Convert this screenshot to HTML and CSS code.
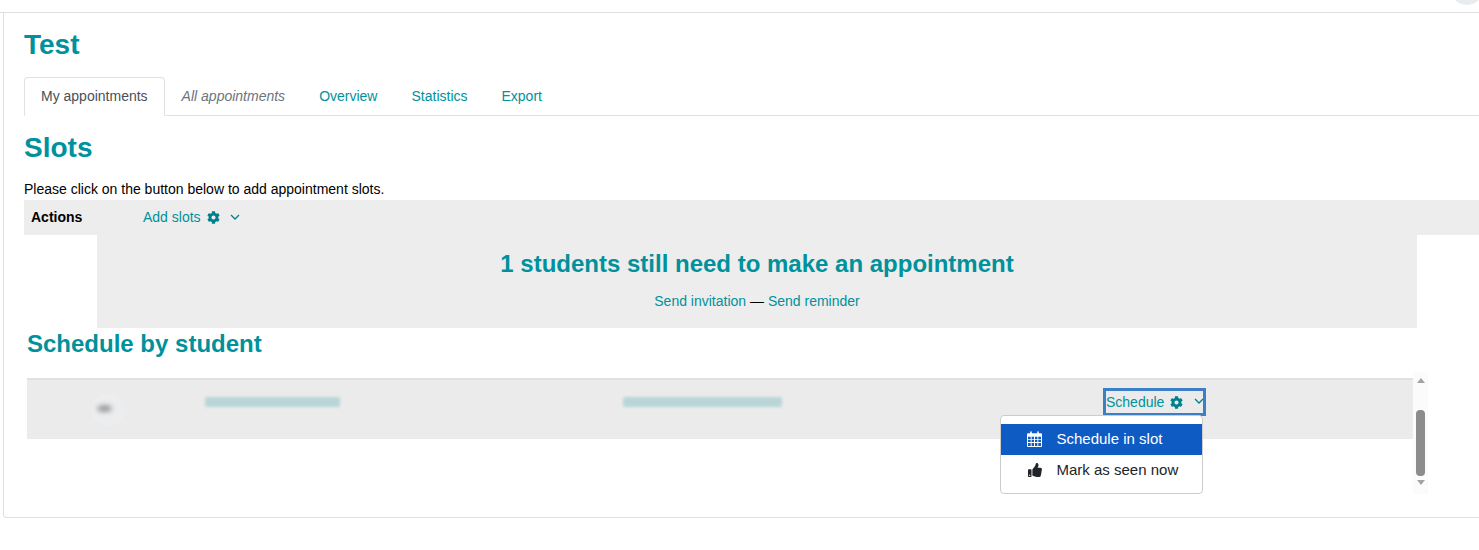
FILE: index.html
```html
<!DOCTYPE html>
<html lang="en">
<head>
    <meta charset="UTF-8">
    <title>Test: My appointments</title>
    <link rel="stylesheet" href="styles.css">
</head>
<body>
    <svg class="icon-defs" width="0" height="0">
        <symbol id="i-cog" viewBox="0 0 512 512">
            <path d="M487.4 315.7l-42.6-24.6c4.3-23.2 4.3-47 0-70.2l42.6-24.6c4.9-2.8 7.1-8.6 5.5-14-11.1-35.6-30-67.8-54.7-94.6-3.8-4.1-10-5.1-14.8-2.3L380.8 110c-17.9-15.4-38.5-27.3-60.8-35.1V25.8c0-5.6-3.9-10.5-9.4-11.7-36.7-8.2-74.3-7.8-109.2 0-5.5 1.2-9.4 6.1-9.4 11.7V75c-22.2 7.9-42.8 19.8-60.8 35.1L88.7 85.5c-4.9-2.8-11-1.9-14.8 2.3-24.7 26.7-43.6 58.9-54.7 94.6-1.7 5.4.6 11.2 5.5 14L67.3 221c-4.3 23.2-4.3 47 0 70.2l-42.6 24.6c-4.9 2.8-7.1 8.6-5.5 14 11.1 35.6 30 67.8 54.7 94.6 3.8 4.1 10 5.1 14.8 2.3l42.6-24.6c17.9 15.4 38.5 27.3 60.8 35.1v49.2c0 5.6 3.9 10.5 9.4 11.7 36.7 8.2 74.3 7.8 109.2 0 5.5-1.2 9.4-6.1 9.4-11.7v-49.2c22.2-7.9 42.8-19.8 60.8-35.1l42.6 24.6c4.9 2.8 11 1.9 14.8-2.3 24.7-26.7 43.6-58.9 54.7-94.6 1.5-5.5-.7-11.3-5.6-14.1zM256 336c-44.1 0-80-35.9-80-80s35.9-80 80-80 80 35.9 80 80-35.9 80-80 80z"/>
        </symbol>
        <symbol id="i-chevron" viewBox="0 0 10 6">
            <path d="M1 1l4 4 4-4" fill="none" stroke="currentColor" stroke-width="1.3"/>
        </symbol>
        <symbol id="i-thumb" viewBox="0 0 512 512">
            <path d="M104 224H24c-13.255 0-24 10.745-24 24v240c0 13.255 10.745 24 24 24h80c13.255 0 24-10.745 24-24V248c0-13.255-10.745-24-24-24zM64 472c-13.255 0-24-10.745-24-24s10.745-24 24-24 24 10.745 24 24-10.745 24-24 24zM384 81.452c0 42.416-25.97 66.208-33.277 94.548h101.723c33.397 0 59.397 27.746 59.553 58.098.084 17.938-7.546 37.249-19.439 49.197l-.11.11c9.836 23.337 8.237 56.037-9.308 79.469 8.681 25.895-.069 57.704-16.382 74.757 4.298 17.598 2.244 32.575-6.148 44.632C440.202 511.587 389.616 512 346.839 512l-2.845-.001c-48.287-.017-87.806-17.598-119.56-31.725-15.957-7.099-36.821-15.887-52.651-16.178-6.54-.12-11.783-5.457-11.783-11.998v-213.77c0-3.2 1.282-6.271 3.558-8.521 39.614-39.144 56.648-80.587 89.117-113.111 14.804-14.832 20.188-37.236 25.393-58.902C282.515 39.293 291.817 0 312 0c24 0 72 8 72 81.452z"/>
        </symbol>
        <symbol id="i-calendar" viewBox="0 0 15 16">
            <path fill-rule="evenodd" d="M1 2.2h2.2V1a.8.8 0 0 1 1.6 0v1.2h5.4V1a.8.8 0 0 1 1.6 0v1.2H14a1 1 0 0 1 1 1V15a1 1 0 0 1-1 1H1a1 1 0 0 1-1-1V3.2a1 1 0 0 1 1-1zM1 5.8v2.1h2.7V5.8zM4.6 5.8v2.1h2.4V5.8zM8 5.8v2.1h2.4V5.8zM11.3 5.8v2.1H14V5.8zM1 8.8v2.2h2.7V8.8zM4.6 8.8v2.2h2.4V8.8zM8 8.8v2.2h2.4V8.8zM11.3 8.8v2.2H14V8.8zM1 11.9V15h2.7v-3.1zM4.6 11.9V15h2.4v-3.1zM8 11.9V15h2.4v-3.1zM11.3 11.9V15H14v-3.1z"/>
        </symbol>
    </svg>

    <div class="user-bump"></div>

    <div class="page">
        <div class="card">
            <h2 class="page-title">Test</h2>

            <ul class="tabs">
                <li class="tab active">My appointments</li>
                <li class="tab muted">All appointments</li>
                <li class="tab"><a href="#">Overview</a></li>
                <li class="tab"><a href="#">Statistics</a></li>
                <li class="tab"><a href="#">Export</a></li>
            </ul>

            <h2 class="section-title">Slots</h2>
            <p class="hint">Please click on the button below to add appointment slots.</p>

            <div class="actions-bar">
                <strong class="actions-label">Actions</strong>
                <a href="#" class="menu-link">Add slots
                    <svg class="cog"><use href="#i-cog"/></svg>
                    <svg class="chevron"><use href="#i-chevron"/></svg>
                </a>
            </div>

            <div class="notice">
                <h3 class="notice-title">1 students still need to make an appointment</h3>
                <p class="notice-links"><a href="#">Send invitation</a> — <a href="#">Send reminder</a></p>
            </div>

            <h3 class="student-title">Schedule by student</h3>

            <div class="scroll-area">
                <div class="table-wrap">
                    <div class="student-row">
                        <div class="cell-avatar"><span class="avatar-halo"><span class="avatar-blur"></span></span></div>
                        <div class="cell"><span class="blur-text name-blur"></span></div>
                        <div class="cell"><span class="blur-text mail-blur"></span></div>
                        <div class="cell">
                            <a href="#" class="menu-link schedule-link">Schedule
                                <svg class="cog"><use href="#i-cog"/></svg>
                                <svg class="chevron"><use href="#i-chevron"/></svg>
                            </a>
                        </div>
                    </div>

                    <div class="dropdown">
                        <a href="#" class="dropdown-item selected">
                            <span class="item-slot"><svg class="icon-calendar"><use href="#i-calendar"/></svg></span>Schedule in slot
                        </a>
                        <a href="#" class="dropdown-item">
                            <span class="item-slot"><svg class="icon-thumb"><use href="#i-thumb"/></svg></span>Mark as seen now
                        </a>
                    </div>
                </div>

                <div class="scrollbar">
                    <span class="arrow-up"></span>
                    <span class="thumb"></span>
                    <span class="arrow-down"></span>
                </div>
            </div>
        </div>
    </div>
</body>
</html>
```

FILE: styles.css
```css
body {
    margin: 0;
    height: 550px;
    overflow: hidden;
    background: #fff;
    color: #000;
    font-family: "Liberation Sans", Arial, sans-serif;
    font-size: 14px;
    line-height: 21px;
}

a {
    color: #00919c;
    text-decoration: none;
}

.icon-defs {
    position: absolute;
}

.user-bump {
    position: absolute;
    top: -14px;
    right: -1px;
    width: 26px;
    height: 19px;
    border-radius: 50%;
    background: #e9ecef;
}

.page {
    margin-top: 12px;
    border-top: 1px solid #dfdfdf;
}

.card {
    box-sizing: border-box;
    width: 1500px;
    height: 505px;
    margin-left: 3px;
    padding: 15px 0 0 20px;
    border: 1px solid #dfdfdf;
    border-top: 0;
    border-radius: 0 0 4px 4px;
}

.page-title,
.section-title {
    margin: 0;
    color: #00919c;
    font-size: 28px;
    line-height: 34px;
    font-weight: bold;
}

.tabs {
    display: flex;
    width: 1456px;
    margin: 15px 0 0;
    padding: 0;
    list-style: none;
    border-bottom: 1px solid #dee2e6;
}

.tab {
    padding: 8px 16px;
    margin-bottom: -1px;
    border: 1px solid transparent;
    border-radius: 4px 4px 0 0;
}

.tab.active {
    color: #495057;
    border-color: #dee2e6 #dee2e6 #fff;
    background: #fff;
}

.tab.muted {
    color: #6c757d;
    font-style: italic;
}

.section-title {
    margin-top: 15px;
}

.hint {
    margin: 16px 0 0;
    height: 19px;
    line-height: 16px;
}

.actions-bar {
    display: flex;
    align-items: center;
    width: 1456px;
    height: 35px;
    background: #ededed;
}

.actions-label {
    width: 112px;
    padding-left: 7px;
}

.menu-link {
    display: inline-flex;
    align-items: center;
}

.cog {
    width: 13px;
    height: 13px;
    margin-left: 6px;
    fill: #00808c;
}

.chevron {
    width: 10px;
    height: 6px;
    margin: 0 0 2px 10px;
    color: #00808c;
}

.notice {
    width: 1320px;
    height: 93px;
    margin-left: 73px;
    background: #ededed;
    text-align: center;
    overflow: hidden;
}

.notice-title {
    margin: 14px 0 0;
    color: #00919c;
    font-size: 24px;
    line-height: 29px;
    font-weight: bold;
}

.notice-links {
    margin: 13px 0 0;
}

.student-title {
    margin: 1px 0 0 3px;
    color: #00919c;
    font-size: 24px;
    line-height: 29px;
    font-weight: bold;
}

.scroll-area {
    display: flex;
    width: 1401px;
    height: 122px;
    margin: 14px 0 0 3px;
}

.table-wrap {
    position: relative;
    flex: 1;
    padding-top: 6px;
}

.student-row {
    display: grid;
    grid-template-columns: 178px 418px 481px 1fr;
    align-items: center;
    height: 59px;
    border-top: 2px solid #dee2e6;
    background: #ebebeb;
}

.cell {
    display: flex;
    align-items: center;
    padding-bottom: 15px;
}

.cell-avatar {
    padding-left: 64px;
}

.avatar-halo {
    display: flex;
    align-items: center;
    justify-content: center;
    width: 34px;
    height: 33px;
    border-radius: 50%;
    background: #ebedef;
}

.avatar-blur {
    display: block;
    width: 15px;
    height: 7px;
    margin: 0 7px 3px 0;
    background: #9a9a9a;
    border-radius: 50%;
    filter: blur(2.5px);
}

.blur-text {
    display: block;
    height: 10px;
    background: #b9d5d8;
    border-radius: 2px;
    filter: blur(1.5px);
}

.name-blur {
    width: 135px;
}

.mail-blur {
    width: 159px;
}

.schedule-link {
    box-sizing: border-box;
    width: 103px;
    height: 28px;
    margin-left: -1px;
    padding-left: 3px;
    outline: 3px solid #3d7fc6;
    outline-offset: -3px;
}

.schedule-link .chevron {
    margin-left: 11px;
}

.dropdown {
    position: absolute;
    top: 43px;
    left: 973px;
    box-sizing: border-box;
    width: 203px;
    height: 79px;
    padding: 8px 0;
    border: 1px solid #ccc;
    border-radius: 4px;
    background: #fff;
}

.dropdown-item {
    display: flex;
    align-items: center;
    box-sizing: border-box;
    height: 31px;
    padding: 0 0 2px 26px;
    color: #212529;
    font-size: 15px;
}

.dropdown-item.selected {
    background: #0f5bc4;
    color: #fff;
}

.item-slot {
    display: flex;
    justify-content: center;
    width: 16px;
    margin-right: 13.5px;
}

.icon-calendar {
    width: 15px;
    height: 16px;
    margin-left: -2px;
    fill: currentColor;
}

.icon-thumb {
    width: 14px;
    height: 14px;
    margin-left: -1px;
    fill: currentColor;
}

.scrollbar {
    display: flex;
    flex-direction: column;
    align-items: center;
    width: 15px;
    background: #fbfbfb;
}

.arrow-up,
.arrow-down {
    width: 0;
    height: 0;
    border-left: 4.5px solid transparent;
    border-right: 4.5px solid transparent;
}

.arrow-up {
    margin-top: 6px;
    border-bottom: 5px solid #a3a3a3;
}

.arrow-down {
    margin-top: 4px;
    border-top: 5px solid #a3a3a3;
}

.thumb {
    width: 9px;
    height: 66px;
    margin-top: 27px;
    border-radius: 4px;
    background: #8c8c8c;
}
```
